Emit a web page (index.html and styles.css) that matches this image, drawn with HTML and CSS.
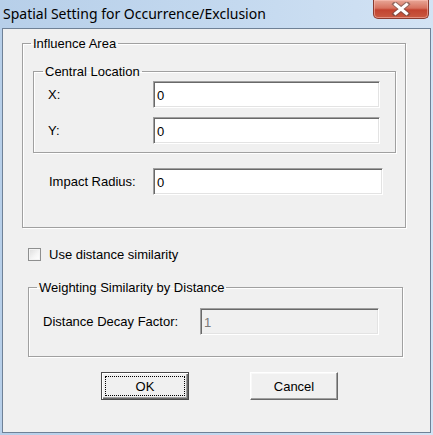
FILE: index.html
```html
<!DOCTYPE html>
<html>
<head>
<meta charset="utf-8">
<link rel="stylesheet" href="styles.css">
</head>
<body>
<div class="window">
  <div class="titlebar">
    <span class="title">Spatial Setting for Occurrence/Exclusion</span>
    <div class="close">
      <svg width="20" height="14" viewBox="0 0 20 14">
        <path d="M4 2 L16 12 M16 2 L4 12" stroke="#5a4a48" stroke-width="5" stroke-linecap="square" fill="none" opacity="0.55"/>
        <path d="M4.5 2.5 L15.5 11.5 M15.5 2.5 L4.5 11.5" stroke="#ffffff" stroke-width="3" stroke-linecap="square" fill="none"/>
      </svg>
    </div>
  </div>
  <div class="client">
    <fieldset class="group influence">
      <legend>Influence Area</legend>
      <fieldset class="group central">
        <legend>Central Location</legend>
        <div class="row">
          <label class="lbl">X:</label>
          <div class="input wide">0</div>
        </div>
        <div class="row">
          <label class="lbl">Y:</label>
          <div class="input wide">0</div>
        </div>
      </fieldset>
      <div class="row radius">
        <label class="lbl">Impact Radius:</label>
        <div class="input wider">0</div>
      </div>
    </fieldset>

    <div class="check-row">
      <span class="checkbox"></span>
      <span class="check-label">Use distance similarity</span>
    </div>

    <fieldset class="group weighting">
      <legend>Weighting Similarity by Distance</legend>
      <div class="row decay">
        <label class="lbl">Distance Decay Factor:</label>
        <div class="input disabled">1</div>
      </div>
    </fieldset>

    <div class="buttons">
      <div class="btn default"><span class="focus">OK</span></div>
      <div class="btn">Cancel</div>
    </div>
  </div>
</div>
</body>
</html>
```

FILE: styles.css
```css
html, body {
  margin: 0;
  padding: 0;
}
body {
  width: 433px;
  height: 435px;
  overflow: hidden;
  background: #b9d1ea;
  font-family: "Liberation Sans", Arial, sans-serif;
  font-size: 13px;
  color: #000;
}
.window {
  width: 433px;
  height: 435px;
  display: flex;
  flex-direction: column;
  background: linear-gradient(to right, #b7cfe9 0%, #c4d9ef 55%, #d3e3f4 100%);
}
.titlebar {
  position: relative;
  height: 28px;
  flex: none;
  display: flex;
  align-items: center;
  padding-left: 3px;
  box-sizing: border-box;
}
.title {
  font-family: "Noto Sans", "Open Sans", sans-serif;
  font-size: 14px;
  color: #000;
  margin-top: -2px;
}
.close {
  position: absolute;
  left: 373px;
  top: 0;
  width: 56px;
  height: 19px;
  box-sizing: border-box;
  border: 1px solid #8a3b30;
  border-top: none;
  border-radius: 0 0 5px 5px;
  background: linear-gradient(to bottom, #e8a797 0%, #d7725f 45%, #c2432f 55%, #c95a42 100%);
  box-shadow: inset 0 0 0 1px rgba(255,200,190,0.5);
  display: flex;
  align-items: center;
  justify-content: center;
}
.close svg { display: block; margin-top: -1px; }

.client {
  flex: none;
  margin: 0 2px 0 2px;
  height: 405px;
  box-sizing: border-box;
  border: 1px solid #6f8196;
  background: #f0f0f0;
  padding-top: 7px;
}

.group {
  margin: 0;
  padding: 0;
  min-width: 0;
  border: 1px solid #a0a0a0;
  box-shadow: inset 1px 1px 0 #ffffff, 1px 1px 0 #ffffff;
  box-sizing: border-box;
}
.group legend {
  margin-left: 8px;
  padding: 0 2px;
  line-height: 15px;
}
.influence {
  margin-left: 19px;
  width: 384px;
  padding-top: 13px;
  padding-bottom: 32px;
}
.central {
  margin-left: 10px;
  width: 363px;
  padding: 2px 0 8px 0;
}
.central legend { margin-left: 9px; }
.row {
  display: flex;
  align-items: center;
}
.central .row { padding-left: 14px; }
.central .row + .row { margin-top: 9px; }
.lbl {
  flex: none;
}
.central .lbl { width: 105px; }
.radius {
  margin-top: 15px;
  padding-left: 26px;
}
.radius .lbl { width: 104px; }

.input {
  box-sizing: border-box;
  height: 27px;
  background: #fff;
  border-top: 1px solid #a0a0a0;
  border-left: 1px solid #a0a0a0;
  border-right: 1px solid #ffffff;
  border-bottom: 1px solid #ffffff;
  box-shadow: inset 1px 1px 0 #696969, inset -1px -1px 0 #e3e3e3;
  padding-left: 3px;
  padding-top: 1px;
  display: flex;
  align-items: center;
}
.wide { width: 227px; }
.wider { width: 230px; }
.disabled {
  width: 179px;
  background: #f0f0f0;
  color: #7a7a7a;
}

.check-row {
  display: flex;
  align-items: center;
  margin: 19px 0 0 25px;
  height: 14px;
}
.checkbox {
  width: 13px;
  height: 13px;
  box-sizing: border-box;
  border: 1px solid #8e8f8f;
  background: linear-gradient(135deg, #dcdcdc 0%, #f6f6f6 60%, #ffffff 100%);
  box-shadow: inset 0 0 0 1px #f4f4f4;
  flex: none;
}
.check-label {
  margin-left: 8px;
}

.weighting {
  margin-left: 25px;
  margin-top: 19px;
  width: 375px;
  padding: 13px 0 21px 0;
}
.decay { padding-left: 14px; }
.decay .lbl { width: 157px; }

.buttons {
  display: flex;
  margin: 15px 0 0 98px;
  gap: 61px;
}
.btn {
  box-sizing: border-box;
  width: 88px;
  height: 28px;
  display: flex;
  align-items: center;
  justify-content: center;
  background: #f0f0f0;
  border-top: 1px solid #ffffff;
  border-left: 1px solid #ffffff;
  border-right: 1px solid #696969;
  border-bottom: 1px solid #696969;
  box-shadow: inset -1px -1px 0 #a0a0a0, inset 1px 1px 0 #f8f8f8;
}
.btn.default {
  border: 1px solid #4a4a4a;
  box-shadow: inset 1px 1px 0 #ffffff, inset -1px -1px 0 #696969, inset -2px -2px 0 #a0a0a0;
  padding: 3px;
}
.focus {
  display: flex;
  align-items: center;
  justify-content: center;
  width: 100%;
  height: 100%;
  box-sizing: border-box;
  border: 1px dotted #000;
}
```
